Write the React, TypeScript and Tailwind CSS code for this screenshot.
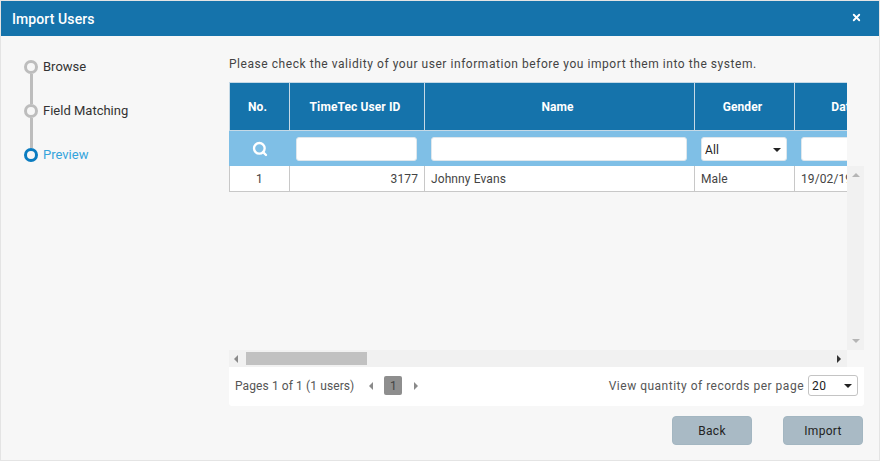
import React from "react";
import { Search, X } from "lucide-react";

const font = { fontFamily: "Roboto, 'Liberation Sans', sans-serif" };

function Step({ label, active, last }: { label: string; active?: boolean; last?: boolean }) {
  return (
    <div className="flex h-[44px] items-start">
      <div className="relative flex w-[14px] flex-col items-center">
        <span className={`z-10 h-[14px] w-[14px] rounded-full border-[3px] bg-[#f7f7f7] ${active ? "border-[#0b7cc0]" : "border-[#bdbdbd]"}`} />
        {!last && <span className="absolute top-[14px] h-[30px] w-[3px] bg-[#bdbdbd]" />}
      </div>
      <span className={`ml-[5px] text-[13px] leading-[14px] ${active ? "text-[#35a4dc]" : "text-[#333333]"}`}>{label}</span>
    </div>
  );
}

function Caret({ className }: { className: string }) {
  return <span className={`h-0 w-0 ${className}`} />;
}

export default function App() {
  return (
    <div style={font} className="flex h-[461px] w-[880px] flex-col overflow-hidden border border-[#e4e4e4] bg-[#f7f7f7]">
      <div className="flex h-[35px] shrink-0 items-center justify-between bg-[#1573ab] pl-[11px] pr-[17px] text-white">
        <span className="pt-[2px] text-[14px] font-medium tracking-[0.1px]">Import Users</span>
        <X size={11} strokeWidth={4} className="-mt-[2px]" />
      </div>

      <div className="flex min-h-0 flex-1">
        <div className="w-[228px] shrink-0 pl-[23px] pt-[24px]">
          <Step label="Browse" />
          <Step label="Field Matching" />
          <Step label="Preview" active last />
        </div>

        <div className="flex w-[635px] flex-col">
          <p className="mt-[20px] h-[26px] text-[12px] leading-[16px] tracking-[0.55px] text-[#444444]">
            Please check the validity of your user information before you import them into the system.
          </p>

          <div className="flex h-[285px] flex-col">
            <div className="flex min-h-0 flex-1">
              <div className="w-[618px] overflow-hidden">
                <div className="grid w-[708px] grid-cols-[61px_135px_270px_100px_142px] text-[12px] tracking-[0.1px]">
                  <div className="flex h-[49px] items-center justify-center border border-[#c5d9e6] bg-[#1573ab] pr-[4px] font-bold text-white">No.</div>
                  <div className="flex h-[49px] items-center justify-center border-y border-r border-[#c5d9e6] bg-[#1573ab] pr-[4px] font-bold text-white">TimeTec User ID</div>
                  <div className="flex h-[49px] items-center justify-center border-y border-r border-[#c5d9e6] bg-[#1573ab] pr-[4px] font-bold text-white">Name</div>
                  <div className="flex h-[49px] items-center justify-center border-y border-r border-[#c5d9e6] bg-[#1573ab] pr-[4px] font-bold text-white">Gender</div>
                  <div className="flex h-[49px] items-center justify-center border-y border-[#c5d9e6] bg-[#1573ab] font-bold text-white">Date of Birth</div>

                  <div className="flex h-[35px] items-center justify-center bg-[#7fbfe6] text-white"><Search size={16} strokeWidth={3.5} /></div>
                  <div className="flex h-[35px] items-center bg-[#7fbfe6] pl-[6px] pr-[8px]"><input className="h-[24px] w-full rounded-[3px] border border-[#dfe7ec] bg-white" /></div>
                  <div className="flex h-[35px] items-center bg-[#7fbfe6] pl-[6px] pr-[8px]"><input className="h-[24px] w-full rounded-[3px] border border-[#dfe7ec] bg-white" /></div>
                  <div className="flex h-[35px] items-center bg-[#7fbfe6] pl-[6px] pr-[8px]">
                    <div className="flex h-[24px] w-full items-center justify-between rounded-[3px] border border-[#dfe7ec] bg-white pl-[3px] pr-[5px] pt-[2px] text-[#222222]">
                      All
                      <Caret className="border-x-[4px] border-t-[4px] border-x-transparent border-t-[#222222]" />
                    </div>
                  </div>
                  <div className="flex h-[35px] items-center bg-[#7fbfe6] pl-[6px] pr-[8px]"><input className="h-[24px] w-full rounded-[3px] border border-[#dfe7ec] bg-white" /></div>

                  <div className="flex h-[26px] items-center justify-center border-x border-b border-[#c8c8c8] bg-white text-[#444444]">1</div>
                  <div className="flex h-[26px] items-center justify-end border-r border-b border-[#c8c8c8] bg-white pr-[6px] text-[#444444]">3177</div>
                  <div className="flex h-[26px] items-center border-r border-b border-[#c8c8c8] bg-white pl-[6px] text-[#444444]">Johnny Evans</div>
                  <div className="flex h-[26px] items-center border-r border-b border-[#c8c8c8] bg-white pl-[6px] text-[#444444]">Male</div>
                  <div className="flex h-[26px] items-center border-b border-[#c8c8c8] bg-white pl-[6px] text-[#444444]">19/02/1990</div>
                </div>
              </div>
              <div className="mt-[84px] flex w-[17px] flex-col items-center justify-between bg-[#f1f1f1] py-[7px]">
                <Caret className="border-x-[4px] border-b-[4px] border-x-transparent border-b-[#b5b5b5]" />
                <Caret className="border-x-[4px] border-t-[4px] border-x-transparent border-t-[#b5b5b5]" />
              </div>
            </div>
            <div className="flex h-[17px] w-[618px] shrink-0 items-center bg-[#f1f1f1]">
              <Caret className="ml-[5px] border-y-[4px] border-r-[4px] border-y-transparent border-r-[#8a8a8a]" />
              <div className="ml-[8px] h-[13px] w-[121px] bg-[#c1c1c1]" />
              <Caret className="ml-auto mr-[6px] border-y-[4px] border-l-[4px] border-y-transparent border-l-[#333333]" />
            </div>
          </div>

          <div className="flex h-[39px] items-center justify-between rounded-b-[3px] bg-white pl-[6px] pr-[6px] text-[12px] text-[#555555]">
            <div className="-mt-[2px] flex items-center tracking-[0.1px]">
              <span>Pages 1 of 1 (1 users)</span>
              <Caret className="ml-[15px] border-y-[4px] border-r-[4px] border-y-transparent border-r-[#8a8a8a]" />
              <span className="ml-[11px] flex h-[19px] w-[18px] items-center justify-center rounded-[2px] bg-[#8e8e8e] text-[#444444]">1</span>
              <Caret className="ml-[12px] border-y-[4px] border-l-[4px] border-y-transparent border-l-[#8a8a8a]" />
            </div>
            <div className="-mt-[2px] flex items-center tracking-[0.5px]">
              <span>View quantity of records per page</span>
              <div className="ml-[4px] flex h-[21px] w-[50px] items-center justify-between rounded-[3px] border border-[#c4c4c4] bg-white pl-[3px] pr-[5px] text-[#222222]">
                20
                <Caret className="border-x-[4px] border-t-[4px] border-x-transparent border-t-[#222222]" />
              </div>
            </div>
          </div>

          <div className="mt-[10px] flex justify-end gap-[31px] pr-[1px]">
            <button className="h-[29px] w-[80px] rounded-[4px] border border-[#a3b6c1] bg-[#a9bac5] text-[12px] tracking-[0.3px] text-[#222222]">Back</button>
            <button className="h-[29px] w-[80px] rounded-[4px] border border-[#a3b6c1] bg-[#a9bac5] text-[12px] tracking-[0.3px] text-[#222222]">Import</button>
          </div>
        </div>
      </div>
    </div>
  );
}
